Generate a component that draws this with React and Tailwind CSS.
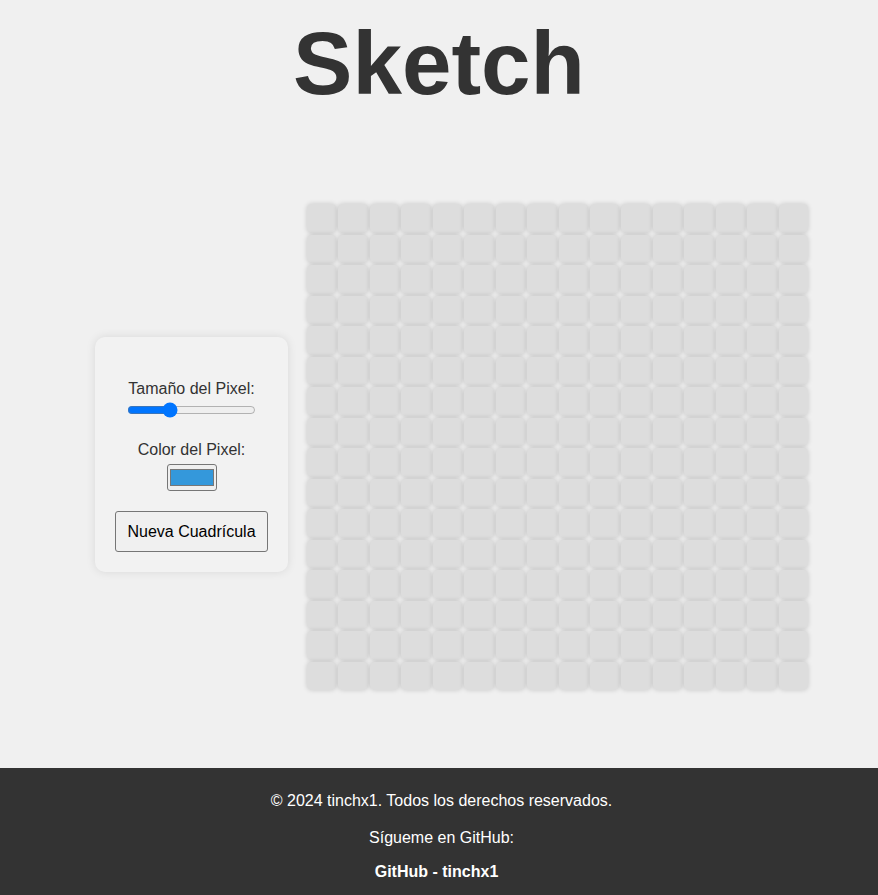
import { useState } from 'react';

const SIZE = 16;

function Cell() {
  return <div className="rounded-[5px] bg-[#dddddd] shadow-[0_0_5px_rgba(0,0,0,0.18)]" />;
}

export default function App() {
  const [pixel, setPixel] = useState(16);
  const [color, setColor] = useState('#3498db');

  return (
    <div className="flex min-h-[895px] flex-col bg-[#f0f0f0] font-['Liberation_Sans',Arial,sans-serif] text-[#333]">
      <h1 className="mt-[14px] text-center text-[89px] font-bold leading-[1.117] text-[#333]">Sketch</h1>

      <main className="flex flex-1 items-start pl-[95px] pt-[91px]">
        <div className="mt-[133px] flex w-[193px] flex-col items-center rounded-[10px] bg-[#f2f2f2] px-5 pb-5 pt-[43px] shadow-[0_0_10px_rgba(0,0,0,0.1)]">
          <label htmlFor="pixel-size" className="text-base leading-[18px]">
            Tamaño del Pixel:
          </label>
          <input
            id="pixel-size"
            type="range"
            min="1"
            max="50"
            value={pixel}
            onChange={(e) => setPixel(Number(e.target.value))}
            className="mt-1 h-4 w-[129px] accent-[#0075ff]"
          />
          <label htmlFor="pixel-color" className="mt-[23px] text-base leading-[18px]">
            Color del Pixel:
          </label>
          <input
            id="pixel-color"
            type="color"
            value={color}
            onChange={(e) => setColor(e.target.value)}
            className="mt-[5px] h-[27px] w-[50px] cursor-pointer rounded-[3px] border border-[#767676] bg-[#efefef] p-0"
          />
          <button
            type="button"
            className="mt-5 rounded-[3px] border border-[#767676] bg-[#f0f0f0] px-[11px] py-[10px] text-base leading-[19px] text-black"
          >
            Nueva Cuadrícula
          </button>
        </div>

        <div className="ml-[19px] grid h-[486px] w-[501px] grid-cols-16 grid-rows-16 gap-[2px]">
          {Array.from({ length: SIZE * SIZE }, (_, i) => (
            <Cell key={i} />
          ))}
        </div>
      </main>

      <footer className="flex h-[127px] flex-col items-center bg-[#333] pt-[24px] text-base text-white">
        <p className="ml-[5px] leading-[18px]">© 2024 tinchx1. Todos los derechos reservados.</p>
        <p className="ml-[5px] mt-[19px] leading-[18px]">Sígueme en GitHub:</p>
        <a href="#" className="mr-[5px] mt-[16px] font-bold leading-[18px] text-white">
          GitHub - tinchx1
        </a>
      </footer>
    </div>
  );
}
